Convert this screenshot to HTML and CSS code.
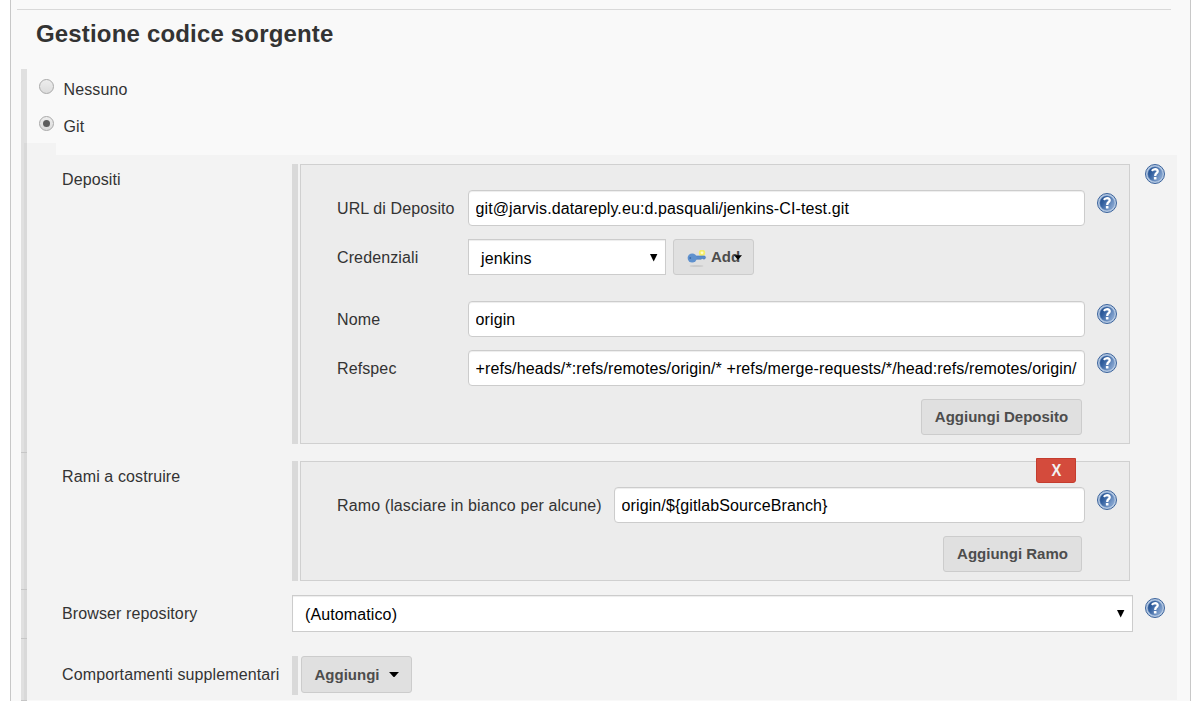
FILE: index.html
```html
<!DOCTYPE html>
<html lang="it">
<head>
<meta charset="utf-8">
<title>Gestione codice sorgente</title>
<link rel="stylesheet" href="styles.css">
</head>
<body>
<svg class="defs" aria-hidden="true">
  <defs>
    <linearGradient id="disc" x1="0" y1="0" x2="1" y2="0.6">
      <stop offset="0" stop-color="#1c4786"/>
      <stop offset="0.4" stop-color="#3461a0"/>
      <stop offset="1" stop-color="#86a5d0"/>
    </linearGradient>
    <symbol id="help" viewBox="0 0 20 20">
      <circle cx="10" cy="10" r="9.5" fill="#b4c8e2" stroke="#3c649c" stroke-width="1"/>
      <circle cx="10" cy="10" r="7.3" fill="url(#disc)" stroke="#6f92c3" stroke-width="0.5"/>
      <path d="M6.9 6.9Q8 5.2 10.1 5.1Q12.7 5.2 12.7 7.3Q12.6 8.4 11.4 9.2Q10.2 10 10.2 11.9" fill="none" stroke="#fff" stroke-width="2.3"/>
      <rect x="8.9" y="13" width="2.6" height="2.6" rx="0.5" fill="#fff"/>
    </symbol>
  </defs>
</svg>
<main class="panel">
  <hr class="divider">
  <h2 class="title">Gestione codice sorgente</h2>
  <div class="scm">
    <div class="rail"><i class="seg seg-top"></i><i class="seg seg-a"></i><i class="seg seg-b"></i><i class="seg seg-c"></i><i class="seg seg-d"></i></div>
    <div class="scm-body">
      <label class="choice"><span class="radio"></span><span>Nessuno</span></label>
      <label class="choice choice-git"><span class="radio radio-on"></span><span>Git</span></label>
      <div class="step"></div>
      <section class="git">
        <div class="row row-repos">
          <div class="label">Depositi</div>
          <div class="group">
            <div class="bar"></div>
            <div class="box">
              <div class="field">
                <span class="name">URL di Deposito</span>
                <input class="text" type="text" value="git@jarvis.datareply.eu:d.pasquali/jenkins-CI-test.git">
                <svg class="help"><use href="#help"/></svg>
              </div>
              <div class="field field-cred">
                <span class="name">Credenziali</span>
                <div class="select select-small"><span>jenkins</span><svg class="arrow" viewBox="0 0 8 8"><path d="M0 0H7.4L3.7 7.4Z"/></svg></div>
                <button class="btn btn-add"><svg class="key" viewBox="0 0 20 18"><ellipse cx="9.5" cy="16" rx="7" ry="1" fill="#cbcbcb"/><circle cx="15" cy="2.8" r="3.2" fill="#f4ec69"/><circle cx="15" cy="2.8" r="1.4" fill="#fffdc4"/><path d="M8 6H17.8L18.6 7.4L17.8 9H16.2L15.2 8.4L14 9.2H8Z" fill="#5b8ccb" stroke="#4679b9" stroke-width="0.6"/><ellipse cx="5.2" cy="8" rx="4.6" ry="4.6" fill="#5f91ce"/><circle cx="3.3" cy="8" r="0.9" fill="#3b69a6"/></svg><span>Add</span><svg class="add-caret" viewBox="0 0 9 5"><path d="M0 0H9L4.5 5Z"/></svg></button>
              </div>
              <div class="field">
                <span class="name">Nome</span>
                <input class="text" type="text" value="origin">
                <svg class="help"><use href="#help"/></svg>
              </div>
              <div class="field">
                <span class="name">Refspec</span>
                <input class="text" type="text" value="+refs/heads/*:refs/remotes/origin/* +refs/merge-requests/*/head:refs/remotes/origin/merge-requests/*">
                <svg class="help"><use href="#help"/></svg>
              </div>
              <div class="actions"><button class="btn btn-repo">Aggiungi Deposito</button></div>
            </div>
          </div>
          <svg class="help help-outer"><use href="#help"/></svg>
        </div>
        <div class="row row-branches">
          <div class="label">Rami a costruire</div>
          <div class="group">
            <div class="bar"></div>
            <div class="box">
              <button class="delete"><span>X</span></button>
              <div class="field">
                <span class="name name-wide">Ramo (lasciare in bianco per alcune)</span>
                <input class="text" type="text" value="origin/${gitlabSourceBranch}">
                <svg class="help"><use href="#help"/></svg>
              </div>
              <div class="actions"><button class="btn btn-branch">Aggiungi Ramo</button></div>
            </div>
          </div>
        </div>
        <div class="row row-browser">
          <div class="label">Browser repository</div>
          <div class="select select-large"><span>(Automatico)</span><svg class="arrow" viewBox="0 0 8 8"><path d="M0 0H7.4L3.7 7.4Z"/></svg></div>
          <svg class="help help-select"><use href="#help"/></svg>
        </div>
        <div class="row row-extra">
          <div class="label">Comportamenti supplementari</div>
          <div class="bar"></div>
          <button class="btn btn-extra"><span>Aggiungi</span><svg class="caret" viewBox="0 0 9 5"><path d="M0 0H9L4.5 5Z"/></svg></button>
        </div>
      </section>
    </div>
  </div>
</main>
</body>
</html>
```
FILE: styles.css
```css
* { box-sizing: border-box; }
html, body { height: 100%; }
body {
  margin: 0;
  padding: 0 6px 0 10px;
  overflow: hidden;
  background: #fff;
  color: #333;
  font: 16px/20px "Liberation Sans", Arial, sans-serif;
  letter-spacing: 0.115px;
}
.defs { position: absolute; width: 0; height: 0; }
.panel {
  height: 701px;
  padding: 9px 13px 0 10px;
  border: solid #c8c8c8;
  border-width: 0 1px;
  background: #f9f9f9;
  overflow: hidden;
}
.divider { height: 1px; margin: 0 6px 0 -4px; border: 0; background: #d9d9d9; }
.title { margin: 0 0 0 15px; height: 59px; padding-top: 10px; font-size: 24px; line-height: 28px; letter-spacing: 0.17px; white-space: nowrap; }
.scm { display: flex; height: 632px; }
.rail { width: 6px; display: flex; flex-direction: column; background: #e0e0e0; }
.seg { border-bottom: 1px solid #c6c6c6; background: linear-gradient(90deg, #e0e0e0 50%, #d9d9d9 50%); }
.seg-top { height: 74px; border: 0; background: #e0e0e0; }
.seg-a { height: 310px; }
.seg-b { height: 137px; }
.seg-c { height: 49px; }
.seg-d { height: 62px; }
.scm-body { flex: 1; }
.choice { display: flex; align-items: flex-start; height: 37px; padding: 11px 0 0 12px; gap: 9.5px; }
.radio {
  width: 15px; height: 15px; margin-top: -1px;
  border: 1px solid #a9a9a9; border-radius: 50%;
  background: linear-gradient(#ededed, #dcdcdc);
  display: grid; place-items: center;
}
.radio-on::after { content: ""; width: 7px; height: 7px; border-radius: 50%; background: #5e5e5e; }
.step { width: 29px; height: 12px; background: #f3f3f3; }
.git { height: 545px; padding: 9px 0 0 35px; background: #f3f3f3; }
.row { display: flex; align-items: flex-start; }
.label { width: 230px; padding-top: 6px; white-space: nowrap; }
.row-repos { height: 297px; }
.row-branches { height: 134px; }
.row-browser { height: 61px; }
.row-browser .label { padding-top: 9px; }
.row-extra .label { padding-top: 9px; }
.group { display: flex; gap: 2px; width: 838px; }
.bar { width: 6px; background: #d9d9d9; }
.row-extra .bar { height: 39px; margin-right: 3px; }
.box { flex: 1; position: relative; border: 1px solid #d0d0d0; background: #ececec; padding: 25px 12px 8px 36px; }
.field { display: flex; height: 36px; margin-bottom: 13px; }
.field-cred { margin-bottom: 26px; }
.name { width: 131px; padding-top: 9px; white-space: nowrap; }
.name-wide { width: 277px; }
.text {
  flex: 1; min-width: 0; height: 36px; padding: 2px 7px 0 6.5px;
  border: 1px solid #ccc; border-radius: 4px; background: #fff;
  box-shadow: inset 0 1px 1px rgba(0,0,0,.075);
  color: #000; font: inherit; letter-spacing: inherit; outline: 0;
}
.help { flex: none; width: 20px; height: 20px; margin: 3px 0 0 12px; }
.help-outer { margin: 0 0 0 15px; }
.help-select { margin-top: 3px; }
.select {
  display: flex; align-items: center; justify-content: space-between;
  height: 36px; padding: 3px 7px 0 12px;
  border: 1px solid #ccc; background: #fff; color: #000;
  box-shadow: inset 0 1px 1px rgba(0,0,0,.075);
}
.select-small { width: 198px; }
.select-large { width: 841px; height: 37px; padding-top: 2px; }
.arrow { width: 8px; height: 8px; margin-top: -2px; }
.btn {
  height: 36px; padding: 0; white-space: nowrap;
  border: 1px solid #ccc; border-radius: 3px; background: #e0e0e0; color: #4d4d4d;
  font: bold 15px/20px "Liberation Sans", Arial, sans-serif; letter-spacing: 0;
}
.btn-add { position: relative; width: 81px; margin-left: 7px; display: flex; align-items: center; padding-left: 13px; gap: 4px; }
.key { width: 20px; height: 18px; margin-top: 3px; }
.add-caret { position: absolute; left: 60px; top: 15px; width: 8px; height: 5px; }
.actions { display: flex; justify-content: flex-end; padding-right: 35px; }
.btn-repo { width: 161px; }
.btn-branch { width: 139px; }
.btn-extra { display: flex; align-items: center; width: 111px; height: 37px; padding-left: 12.5px; gap: 10px; }
.caret { width: 10px; height: 5.5px; }
.delete {
  position: absolute; top: -4px; right: 53px; width: 40px; height: 25px; padding: 0;
  border: 1px solid #c43c2e; border-radius: 0 0 3px 3px; background: #d44b3c; color: #f2f2f2;
  font: bold 16px/20px "Liberation Sans", Arial, sans-serif;
}
.delete span { display: inline-block; transform: scaleX(.92); }
```
